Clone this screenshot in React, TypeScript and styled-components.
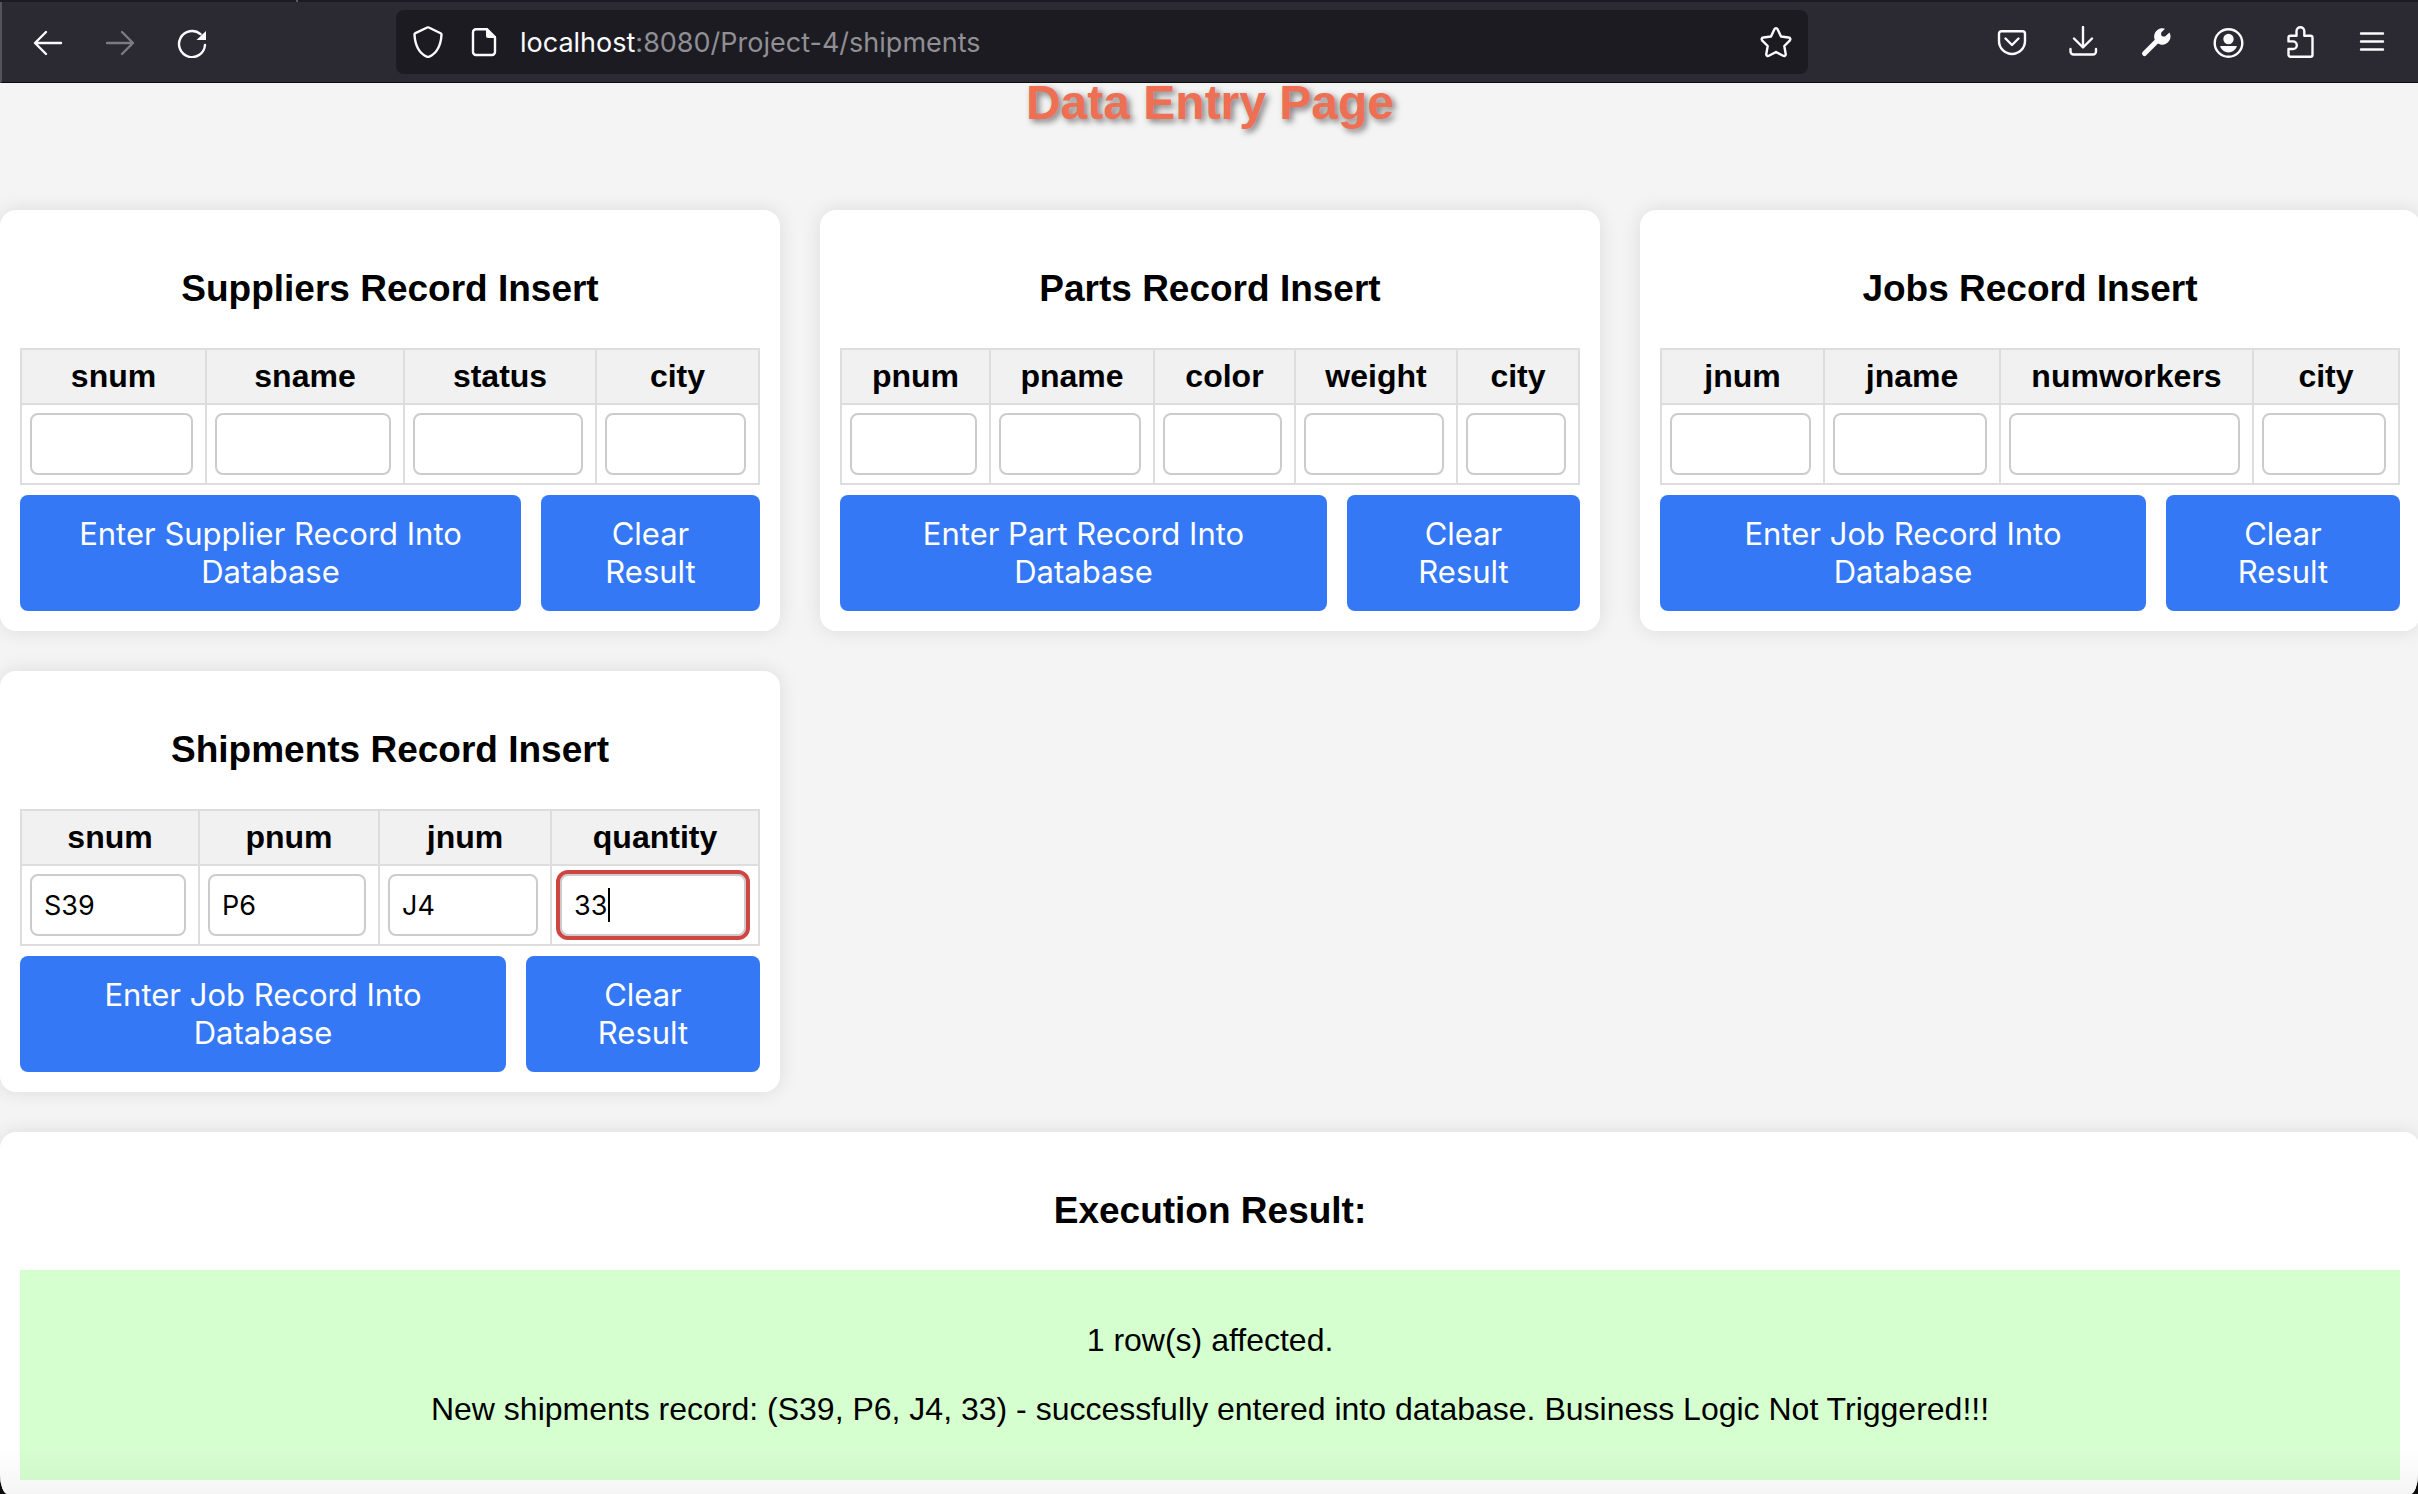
import React, { useId } from "react";
import styled, { createGlobalStyle } from "styled-components";

const GlobalStyle = createGlobalStyle`
  *, *::before, *::after { box-sizing: border-box; }
  body {
    margin: 0;
    background: #0b0b0b;
    color: #000;
    font-family: "Liberation Sans", Arial, sans-serif;
    font-size: 32px;
    line-height: 37px;
  }
`;

const uiFont = `Inter, "Liberation Sans", sans-serif`;

const Window = styled.div`
  position: relative;
  display: flex;
  flex-direction: column;
  height: 100vh;
  overflow: hidden;
  background: #f4f4f4;
  border-radius: 0 0 8px 8px / 0 0 20px 20px;

  &::after {
    content: "";
    position: absolute;
    left: 0;
    right: 0;
    bottom: 0;
    height: 48px;
    background: linear-gradient(rgba(0, 0, 0, 0), rgba(0, 0, 0, 0.04));
    pointer-events: none;
  }
`;

const TabStrip = styled.div`
  flex: none;
  height: 2px;
  padding-left: 296px;
  background: #1c1b22;
`;

const TabDivider = styled.div`
  width: 2px;
  height: 2px;
  background: #5b5b66;
`;

const Toolbar = styled.header`
  flex: none;
  display: flex;
  align-items: center;
  height: 81px;
  padding: 0 10px;
  background: #2b2a33;
  border-left: 2px solid #55545c;
  border-bottom: 1px solid #0c0c0d;
  color: #fbfbfe;
`;

const IconGroup = styled.nav`
  display: flex;
`;

const IconButton = styled.button`
  display: flex;
  align-items: center;
  justify-content: center;
  width: 72px;
  height: 64px;
  padding: 0;
  border: 0;
  background: none;
  color: inherit;

  &:disabled { color: #7c7b82; }
`;

const AddressBar = styled.div`
  flex: 1;
  display: flex;
  align-items: center;
  gap: 20px;
  height: 64px;
  margin: 0 168px;
  padding: 0 16px;
  border-radius: 8px;
  background: #1c1b22;
`;

const SiteIcons = styled.div`
  display: flex;
  gap: 24px;
`;

const Address = styled.div`
  flex: 1;
  padding-top: 2px;
  color: #8f8f94;
  font-family: ${uiFont};
  font-size: 27px;
  line-height: 32px;
`;

const Host = styled.span`
  color: #fbfbfe;
`;

const StarButton = styled(IconButton)`
  width: 32px;
`;

const Icon = styled.svg`
  display: block;
  width: 32px;
  height: 32px;
  fill: none;
  stroke: currentColor;
  stroke-width: 2.4;
  stroke-linecap: round;
  stroke-linejoin: round;
`;

const WrenchHandle = styled.path`
  stroke-width: 5;
`;

const Solid = styled.path`
  fill: currentColor;
  stroke: none;
`;

const Page = styled.main`
  flex: 1;
  min-height: 0;
  margin-right: -2px;
`;

const PageTitle = styled.h1`
  margin: 0 0 87px;
  color: #ee6f53;
  font-size: 48px;
  line-height: 40px;
  text-align: center;
  text-shadow: 3px 3px 6px rgba(0, 0, 0, 0.5);
`;

const Grid = styled.div`
  display: grid;
  grid-template-columns: repeat(3, minmax(0, 1fr));
  gap: 40px;
`;

const Card = styled.section<{ $wide?: boolean }>`
  grid-column: ${(p) => (p.$wide ? "1 / -1" : "auto")};
  padding: 20px;
  border-radius: 16px;
  background: #fff;
  box-shadow: 0 0 20px rgba(0, 0, 0, 0.1);
`;

const CardTitle = styled.h3`
  margin: 37px 0;
  font-size: 37px;
  line-height: 44px;
  text-align: center;
`;

const FieldTable = styled.table`
  width: 100%;
  table-layout: fixed;
  border-collapse: collapse;
`;

const HeadCell = styled.th<{ $share: number }>`
  width: ${(p) => p.$share * 100}%;
  padding: 8px 0;
  border: 2px solid #ddd;
  background: #f1f1f1;
`;

const FieldCell = styled.td`
  padding: 8px 12px 8px 8px;
  border: 2px solid #ddd;
`;

const FieldBox = styled.div`
  position: relative;
`;

const Field = styled.input<{ $active?: boolean }>`
  display: block;
  width: 100%;
  height: 62px;
  padding: 0 12px;
  border: 2px solid #ccc;
  border-radius: 8px;
  outline: ${(p) => (p.$active ? "4px solid #ce4542" : "none")};
  background: #fff;
  color: #000;
  font-family: ${uiFont};
  font-size: 27px;
`;

const Caret = styled.span`
  position: absolute;
  top: 14px;
  left: 48px;
  width: 2px;
  height: 34px;
  background: #000;
`;

const Actions = styled.div`
  display: flex;
  gap: 20px;
  margin-top: 10px;
`;

const ActionButton = styled.button<{ $grow: number }>`
  flex: ${(p) => p.$grow} 1 0;
  padding: 20px 40px;
  border: 0;
  border-radius: 8px;
  background: #3478f6;
  color: #fff;
  font-family: ${uiFont};
  font-size: 31px;
  line-height: 38px;
`;

const Result = styled.div`
  padding: 52px 20px;
  background: #d6ffd0;
  text-align: center;
`;

const ResultLine = styled.p`
  margin: 0;

  & + & { margin-top: 32px; }
`;

type Column = { name: string; weight: number; value?: string; active?: boolean };
type FormSpec = { title: string; columns: Column[]; submit: string; grow: [number, number] };

const forms: FormSpec[] = [
  {
    title: "Suppliers Record Insert",
    submit: "Enter Supplier Record Into Database",
    grow: [421, 139],
    columns: [
      { name: "snum", weight: 185 },
      { name: "sname", weight: 198 },
      { name: "status", weight: 192 },
      { name: "city", weight: 163 },
    ],
  },
  {
    title: "Parts Record Insert",
    submit: "Enter Part Record Into Database",
    grow: [407, 153],
    columns: [
      { name: "pnum", weight: 149 },
      { name: "pname", weight: 164 },
      { name: "color", weight: 141 },
      { name: "weight", weight: 162 },
      { name: "city", weight: 122 },
    ],
  },
  {
    title: "Jobs Record Insert",
    submit: "Enter Job Record Into Database",
    grow: [406, 154],
    columns: [
      { name: "jnum", weight: 163 },
      { name: "jname", weight: 176 },
      { name: "numworkers", weight: 253 },
      { name: "city", weight: 146 },
    ],
  },
  {
    title: "Shipments Record Insert",
    submit: "Enter Job Record Into Database",
    grow: [406, 154],
    columns: [
      { name: "snum", weight: 178, value: "S39" },
      { name: "pnum", weight: 180, value: "P6" },
      { name: "jnum", weight: 172, value: "J4" },
      { name: "quantity", weight: 208, value: "33", active: true },
    ],
  },
];

function RecordForm({ title, columns, submit, grow }: FormSpec) {
  const id = useId();
  const total = columns.reduce((sum, c) => sum + c.weight, 0);
  return (
    <Card>
      <CardTitle>{title}</CardTitle>
      <form onSubmit={(e) => e.preventDefault()}>
        <FieldTable>
          <thead>
            <tr>
              {columns.map((c) => (
                <HeadCell key={c.name} $share={c.weight / total} scope="col">
                  <label htmlFor={id + c.name}>{c.name}</label>
                </HeadCell>
              ))}
            </tr>
          </thead>
          <tbody>
            <tr>
              {columns.map((c) => (
                <FieldCell key={c.name}>
                  <FieldBox>
                    <Field id={id + c.name} name={c.name} type="text" defaultValue={c.value} $active={c.active} />
                    {c.active && <Caret />}
                  </FieldBox>
                </FieldCell>
              ))}
            </tr>
          </tbody>
        </FieldTable>
        <Actions>
          <ActionButton type="submit" $grow={grow[0]}>{submit}</ActionButton>
          <ActionButton type="reset" $grow={grow[1]}>Clear Result</ActionButton>
        </Actions>
      </form>
    </Card>
  );
}

function BrowserToolbar() {
  return (
    <Toolbar>
      <IconGroup aria-label="Navigation">
        <IconButton aria-label="Back">
          <Icon viewBox="0 0 32 32"><path d="M29 17H3.5M14 6 3 17l11 11" /></Icon>
        </IconButton>
        <IconButton aria-label="Forward" disabled>
          <Icon viewBox="0 0 32 32"><path d="M3 17h25.5M18 6l11 11-11 11" /></Icon>
        </IconButton>
        <IconButton aria-label="Reload">
          <Icon viewBox="0 0 32 32">
            <path d="M29 19A13 13 0 1 1 24.5 8.2" />
            <Solid d="M30 5v9h-9.5z" />
          </Icon>
        </IconButton>
      </IconGroup>
      <AddressBar>
        <SiteIcons>
          <Icon viewBox="0 0 32 32">
            <path d="M15.2 1.5 3.4 7.2c-.6.3-1 .8-.9 1.5C3 17 5 26.5 15.2 30.8q.8.3 1.6 0C27 26.5 29 17 29.5 8.7c.1-.7-.3-1.2-.9-1.5L16.8 1.5q-.8-.3-1.6 0z" />
          </Icon>
          <Icon viewBox="0 0 32 32">
            <path d="M18.500 3.200H8a3 3 0 0 0-3 3V26a3 3 0 0 0 3 3h16a3 3 0 0 0 3-3V11.500" />
            <Solid d="M18 2v8q0 2 2 2h8v-1.500L19.500 2z" />
          </Icon>
        </SiteIcons>
        <Address><Host>localhost</Host>:8080/Project-4/shipments</Address>
        <StarButton aria-label="Bookmark this page">
          <Icon viewBox="0 0 32 32">
            <path d="M14.4 3.2c.7-1.5 2.5-1.5 3.2 0l3.400 7.300 7.600 1c1.700.2 2.300 1.900 1.100 3.100L24.300 20l1.400 8c.3 1.600-1.200 2.500-2.600 1.800L16 26l-7.100 3.800c-1.400.7-2.900-.2-2.600-1.800l1.400-8-5.400-5.400c-1.200-1.200-.6-2.900 1.100-3.100l7.600-1z" />
          </Icon>
        </StarButton>
      </AddressBar>
      <IconGroup aria-label="Tools">
        <IconButton aria-label="Save to Pocket">
          <Icon viewBox="0 0 32 32">
            <path d="M5.5 5.2h21a2.5 2.5 0 0 1 2.5 2.5V15a13 13 0 0 1-26 0V7.7a2.5 2.5 0 0 1 2.5-2.5z" />
            <path d="m9.5 12.5 6.5 6.5 6.5-6.5" />
          </Icon>
        </IconButton>
        <IconButton aria-label="Downloads">
          <Icon viewBox="0 0 32 32"><path d="M15 1v20M6 12.500l9 9 9-9M2.500 23v2.500a3 3 0 0 0 3 3h19.500a3 3 0 0 0 3-3V23" /></Icon>
        </IconButton>
        <IconButton aria-label="Developer tools">
          <Icon viewBox="0 0 32 32">
            <WrenchHandle d="M4.500 27.500 18 14" />
            <Solid d="M25 2.700 21.300 6.500q-1 4.500 3.700 4L29.500 6.500A8.200 8.200 0 1 1 25 2.700z" />
          </Icon>
        </IconButton>
        <IconButton aria-label="Account">
          <Icon viewBox="0 0 32 32">
            <circle cx="16.5" cy="17" r="13.8" />
            <Solid d="M16.500 7.800a5.200 5.200 0 1 1 0 10.400a5.200 5.200 0 1 1 0-10.400z" />
            <Solid d="M9 20h15q1.300 0 .7 1.100Q22 26.500 16.500 26.500T8.300 21.100Q7.700 20 9 20z" />
          </Icon>
        </IconButton>
        <IconButton aria-label="Extensions">
          <Icon viewBox="0 0 32 32">
            <path d="M6.500 9.700h6V5.200a3.900 3.900 0 0 1 7.800 0v4.500H26.500a2 2 0 0 1 2 2V28.800a2 2 0 0 1-2 2H6.500a2 2 0 0 1-2-2V23h4.500a3.800 3.800 0 0 0 0-7.600H4.500v-3.700a2 2 0 0 1 2-2z" />
          </Icon>
        </IconButton>
        <IconButton aria-label="Menu">
          <Icon viewBox="0 0 32 32"><path d="M5 7.500h22M5 15.500h22M5 23.500h22" /></Icon>
        </IconButton>
      </IconGroup>
    </Toolbar>
  );
}

export default function App() {
  return (
    <>
      <GlobalStyle />
      <Window>
        <TabStrip><TabDivider /></TabStrip>
        <BrowserToolbar />
        <Page>
          <PageTitle>Data Entry Page</PageTitle>
          <Grid>
            {forms.map((f) => <RecordForm key={f.title} {...f} />)}
            <Card $wide>
              <CardTitle>Execution Result:</CardTitle>
              <Result>
                <ResultLine>1 row(s) affected.</ResultLine>
                <ResultLine>New shipments record: (S39, P6, J4, 33) - successfully entered into database. Business Logic Not Triggered!!!</ResultLine>
              </Result>
            </Card>
          </Grid>
        </Page>
      </Window>
    </>
  );
}
